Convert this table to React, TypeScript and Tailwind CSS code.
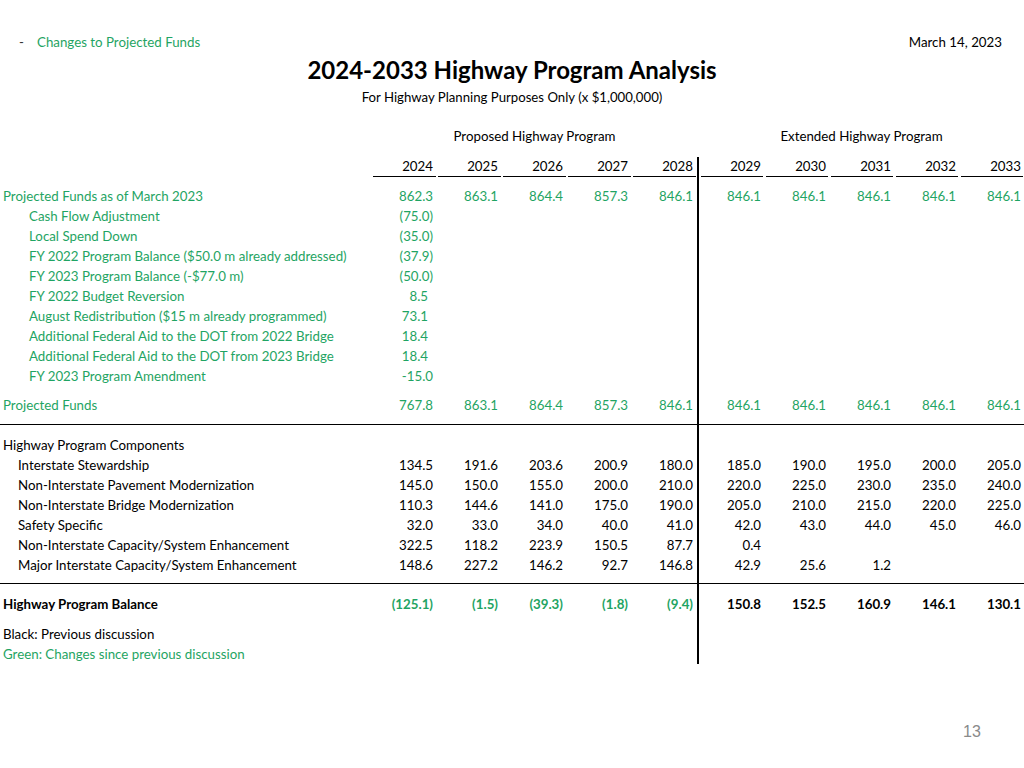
import React from "react";

const GREEN = "text-[#1fa463]";
const GRID = "grid grid-cols-[372px_repeat(5,65px)_2px_repeat(5,65px)]";

type Cell = { v?: string; pad?: boolean };

function Row({
  label,
  vals,
  labelCls = "",
  propCls = "",
  extCls = "",
  h = "h-5",
}: {
  label?: React.ReactNode;
  vals?: (string | Cell)[];
  labelCls?: string;
  propCls?: string;
  extCls?: string;
  h?: string;
}) {
  const cells: Cell[] = [];
  for (let i = 0; i < 10; i++) {
    const x = vals ? vals[i] : undefined;
    if (x === undefined) cells.push({});
    else if (typeof x === "string") cells.push({ v: x });
    else cells.push(x);
  }
  return (
    <div className={`${GRID} ${h} leading-5`}>
      <div className={`whitespace-nowrap ${labelCls}`}>{label}</div>
      {cells.slice(0, 5).map((c, i) => (
        <div key={i} className={`text-right ${c.pad ? "pr-[9px]" : "pr-[4px]"} ${propCls}`}>
          {c.v}
        </div>
      ))}
      <div className="bg-black w-[1.5px] justify-self-center" />
      {cells.slice(5).map((c, i) => (
        <div key={i} className={`text-right pr-[3px] ${extCls}`}>
          {c.v}
        </div>
      ))}
    </div>
  );
}

function Spacer({ h }: { h: string }) {
  return (
    <div className={`${GRID} ${h}`}>
      <div className="col-span-6" />
      <div className="bg-black w-[1.5px] justify-self-center" />
      <div className="col-span-5" />
    </div>
  );
}

export default function App() {
  const years = ["2024", "2025", "2026", "2027", "2028", "2029", "2030", "2031", "2032", "2033"];
  const adj: [string, Cell][] = [
    ["Cash Flow Adjustment", { v: "(75.0)" }],
    ["Local Spend Down", { v: "(35.0)" }],
    ["FY 2022 Program Balance ($50.0 m already addressed)", { v: "(37.9)" }],
    ["FY 2023 Program Balance (-$77.0 m)", { v: "(50.0)" }],
    ["FY 2022 Budget Reversion", { v: "8.5", pad: true }],
    ["August Redistribution ($15 m already programmed)", { v: "73.1", pad: true }],
    ["Additional Federal Aid to the DOT from 2022 Bridge", { v: "18.4", pad: true }],
    ["Additional Federal Aid to the DOT from 2023 Bridge", { v: "18.4", pad: true }],
    ["FY 2023 Program Amendment", { v: "-15.0" }],
  ];
  const comps: [string, string[]][] = [
    ["Interstate Stewardship", ["134.5", "191.6", "203.6", "200.9", "180.0", "185.0", "190.0", "195.0", "200.0", "205.0"]],
    ["Non-Interstate Pavement Modernization", ["145.0", "150.0", "155.0", "200.0", "210.0", "220.0", "225.0", "230.0", "235.0", "240.0"]],
    ["Non-Interstate Bridge Modernization", ["110.3", "144.6", "141.0", "175.0", "190.0", "205.0", "210.0", "215.0", "220.0", "225.0"]],
    ["Safety Specific", ["32.0", "33.0", "34.0", "40.0", "41.0", "42.0", "43.0", "44.0", "45.0", "46.0"]],
    ["Non-Interstate Capacity/System Enhancement", ["322.5", "118.2", "223.9", "150.5", "87.7", "0.4", "", "", "", ""]],
    ["Major Interstate Capacity/System Enhancement", ["148.6", "227.2", "146.2", "92.7", "146.8", "42.9", "25.6", "1.2", "", ""]],
  ];

  return (
    <div className="w-[1024px] h-[768px] bg-white text-black text-[13.3px] font-['Lato','Noto_Sans',sans-serif] relative overflow-hidden">
      {/* top line */}
      <div className="flex items-center h-5 mt-[33px] pl-[19px] pr-[22px]">
        <span className="w-[18px] text-[#333]">-</span>
        <span className={GREEN}>Changes to Projected Funds</span>
        <span className="ml-auto">March 14, 2023</span>
      </div>
      {/* title */}
      <div className="text-center font-bold text-[24px] leading-7 mt-[3px]">
        2024-2033 Highway Program Analysis
      </div>
      <div className="text-center text-[13.2px] leading-4 mt-[5px]">
        For Highway Planning Purposes Only (x $1,000,000)
      </div>
      {/* group headers */}
      <div className={`${GRID} mt-[21px] h-5 leading-5`}>
        <div />
        <div className="col-span-5 text-center">Proposed Highway Program</div>
        <div />
        <div className="col-span-5 text-center">Extended Highway Program</div>
      </div>
      {/* years */}
      <div className={`${GRID} mt-[11px] h-5 leading-5`}>
        <div />
        {years.slice(0, 5).map((y) => (
          <div key={y} className="ml-px mr-px border-b-[1.5px] border-black text-right pr-[3px] leading-[19px]">
            {y}
          </div>
        ))}
        <div className="bg-black w-[1.5px] justify-self-center" />
        {years.slice(5).map((y) => (
          <div key={y} className="ml-[2px] mr-px border-b-[1.5px] border-black text-right pr-[2px] leading-[19px]">
            {y}
          </div>
        ))}
      </div>
      <Spacer h="h-[9px]" />
      <Row
        label="Projected Funds as of March 2023"
        labelCls={`pl-[3px] ${GREEN}`}
        propCls={GREEN}
        extCls={GREEN}
        vals={["862.3", "863.1", "864.4", "857.3", "846.1", "846.1", "846.1", "846.1", "846.1", "846.1"]}
      />
      {adj.map(([l, c]) => (
        <Row key={l} label={l} labelCls={`pl-[29px] ${GREEN}`} propCls={GREEN} vals={[c]} />
      ))}
      <Spacer h="h-[8.5px]" />
      <Row
        label="Projected Funds"
        labelCls={`pl-[3px] ${GREEN}`}
        propCls={GREEN}
        extCls={GREEN}
        vals={["767.8", "863.1", "864.4", "857.3", "846.1", "846.1", "846.1", "846.1", "846.1", "846.1"]}
      />
      <Spacer h="h-[9px]" />
      <div className="h-[1.5px] bg-black w-full" />
      <Spacer h="h-[10px]" />
      <Row label="Highway Program Components" labelCls="pl-[3px]" />
      {comps.map(([l, v]) => (
        <Row key={l} label={l} labelCls="pl-[18px]" vals={v} />
      ))}
      <Spacer h="h-[7.5px]" />
      <div className="h-[1.5px] bg-black w-full" />
      <Spacer h="h-[9.5px]" />
      <Row
        label="Highway Program Balance"
        labelCls="pl-[3px] font-bold"
        propCls={`${GREEN} font-bold`}
        extCls="font-bold"
        vals={["(125.1)", "(1.5)", "(39.3)", "(1.8)", "(9.4)", "150.8", "152.5", "160.9", "146.1", "130.1"]}
      />
      <Spacer h="h-[10px]" />
      <Row label="Black: Previous discussion" labelCls="pl-[3px]" />
      <Row label="Green: Changes since previous discussion" labelCls={`pl-[3px] ${GREEN}`} />
      <div className="absolute left-[963px] top-[722px] text-[16px] leading-5 text-[#8a8a8a] font-['Liberation_Sans',sans-serif]">
        13
      </div>
    </div>
  );
}
